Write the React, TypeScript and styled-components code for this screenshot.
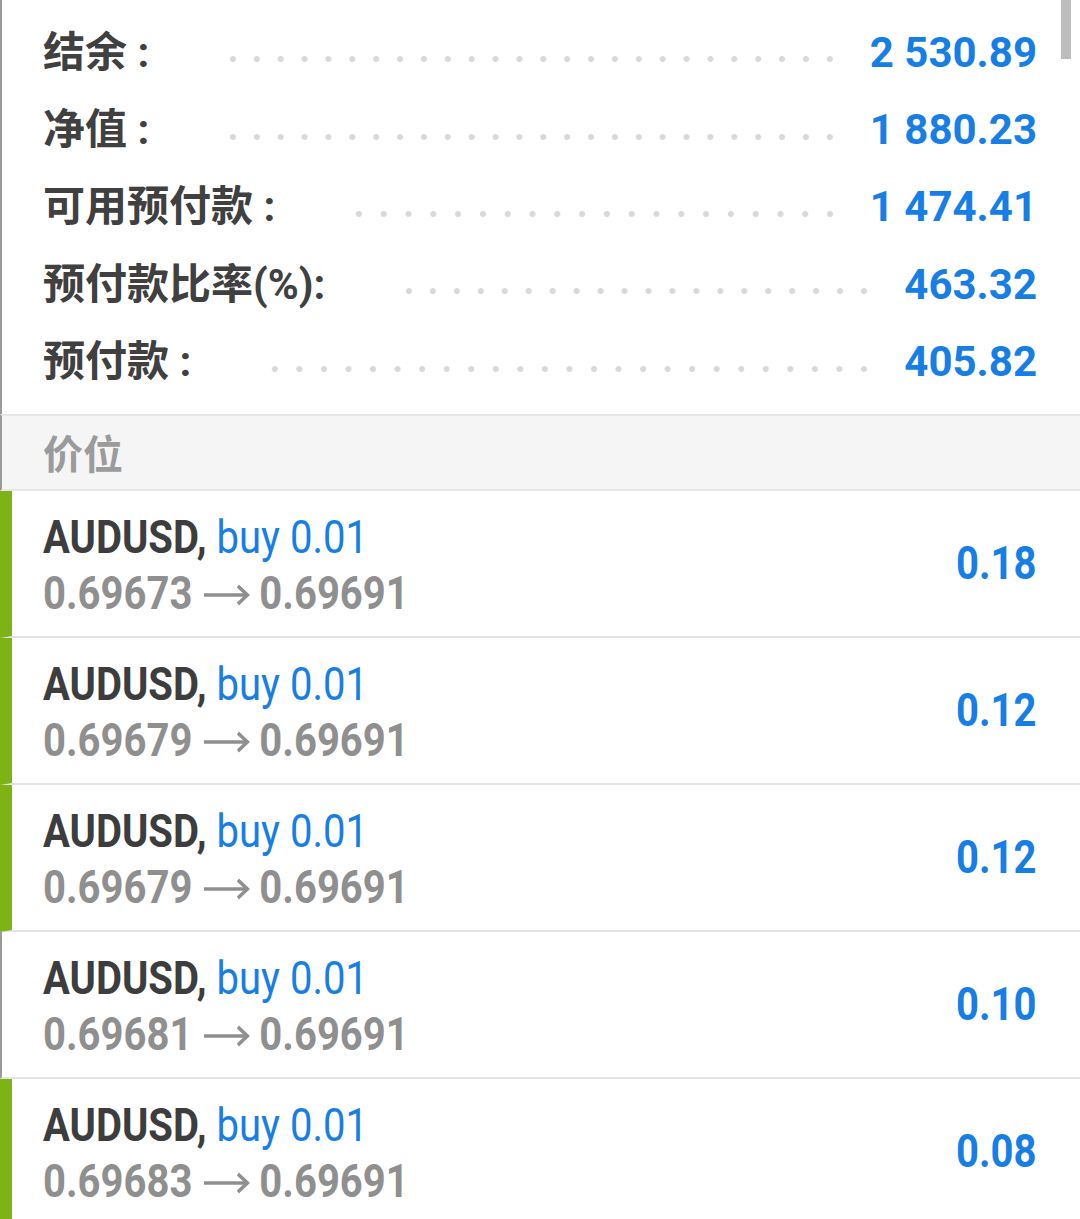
import React from 'react';
import styled, { createGlobalStyle } from 'styled-components';

const GlobalStyle = createGlobalStyle`
  html, body {
    margin: 0;
    padding: 0;
    background: #ffffff;
  }
  body {
    font-family: Roboto, "Noto Sans CJK SC", sans-serif;
  }
`;

const Screen = styled.div`
  position: relative;
  width: 1080px;
  height: 1219px;
  overflow: hidden;
  background: #ffffff;
`;

const ScrollThumb = styled.div`
  position: absolute;
  top: 0;
  right: 9px;
  width: 10px;
  height: 59px;
  background: #bdbdbd;
`;

const Summary = styled.section`
  border-left: 2px solid #9a9a9a;
  padding: 14px 0 13px;
`;

const SummaryRow = styled.div`
  display: flex;
  align-items: center;
  height: 77.4px;
  padding: 0 43px 0 41px;
`;

const Label = styled.span`
  font-family: Roboto, "Noto Sans CJK SC", sans-serif;
  font-weight: 700;
  font-size: 42px;
  line-height: 1;
  color: #404040;
  white-space: nowrap;
`;

const Leader = styled.span`
  flex: 1;
  height: 8px;
  margin: 13px 28px 0 72px;
  background-image: radial-gradient(circle, #d9d9d9 2.6px, rgba(217, 217, 217, 0) 3.4px);
  background-size: 23.8px 8px;
  background-repeat: space no-repeat;
`;

const Amount = styled.span`
  font-family: Roboto, sans-serif;
  font-weight: 700;
  font-size: 42px;
  line-height: 1;
  color: #177ee5;
  white-space: nowrap;
`;

const SectionHeader = styled.div`
  display: flex;
  align-items: center;
  height: 73px;
  padding-left: 41px;
  border-left: 2px solid #9a9a9a;
  border-top: 2px solid #e6e6e6;
  border-bottom: 2px solid #e6e6e6;
  background: #f5f5f5;
  font-family: "Noto Sans CJK SC", sans-serif;
  font-weight: 700;
  font-size: 40px;
  color: #9b9b9b;
`;

const PositionRow = styled.div<{ $active: boolean }>`
  display: flex;
  align-items: center;
  justify-content: space-between;
  height: 145px;
  border-left: ${p => (p.$active ? '12px solid #7db314' : '2px solid #9a9a9a')};
  border-bottom: 2px solid #e4e4e4;
  padding: 0 43px 0 ${p => (p.$active ? 31 : 41)}px;
`;

const Info = styled.div`
  display: flex;
  flex-direction: column;
  padding-top: 4px;
  font-family: Roboto, sans-serif;
  font-size: 46px;
  line-height: 56px;
  white-space: nowrap;
  transform: scaleX(0.87);
  transform-origin: left center;
`;

const Symbol = styled.span`
  font-weight: 700;
  color: #3d3d3d;
`;

const Side = styled.span`
  font-weight: 400;
  color: #177ee5;
`;

const Prices = styled.div`
  display: flex;
  align-items: center;
  font-weight: 700;
  color: #8f8f8f;
`;

const Arrow = styled.svg`
  width: 54px;
  height: 24px;
  margin: 3px 11px 0 12px;
  flex: none;
`;

const Profit = styled.span`
  display: inline-block;
  font-family: Roboto, sans-serif;
  font-weight: 700;
  font-size: 46px;
  line-height: 1;
  color: #177ee5;
  transform: scaleX(0.87);
  transform-origin: right center;
`;

const account = [
  { label: '结余 :', value: '2 530.89' },
  { label: '净值 :', value: '1 880.23' },
  { label: '可用预付款 :', value: '1 474.41' },
  { label: '预付款比率(%):', value: '463.32' },
  { label: '预付款 :', value: '405.82' },
];

const positions = [
  { open: '0.69673', price: '0.69691', profit: '0.18', active: true },
  { open: '0.69679', price: '0.69691', profit: '0.12', active: true },
  { open: '0.69679', price: '0.69691', profit: '0.12', active: true },
  { open: '0.69681', price: '0.69691', profit: '0.10', active: false },
  { open: '0.69683', price: '0.69691', profit: '0.08', active: true },
];

const App: React.FC = () => {
  return (
    <Screen>
      <GlobalStyle />
      <Summary>
        {account.map(row => (
          <SummaryRow key={row.label}>
            <Label>{row.label}</Label>
            <Leader />
            <Amount>{row.value}</Amount>
          </SummaryRow>
        ))}
      </Summary>

      <SectionHeader>价位</SectionHeader>

      {positions.map((pos, i) => (
        <PositionRow key={i} $active={pos.active}>
          <Info>
            <div>
              <Symbol>AUDUSD,</Symbol> <Side>buy 0.01</Side>
            </div>
            <Prices>
              <span>{pos.open}</span>
              <Arrow viewBox="0 0 54 24" fill="none" stroke="currentColor" strokeWidth="3.6">
                <path d="M1 12H51" />
                <path d="M40 3L51 12L40 21" strokeLinejoin="miter" />
              </Arrow>
              <span>{pos.price}</span>
            </Prices>
          </Info>
          <Profit>{pos.profit}</Profit>
        </PositionRow>
      ))}

      <ScrollThumb />
    </Screen>
  );
};

export default App;
